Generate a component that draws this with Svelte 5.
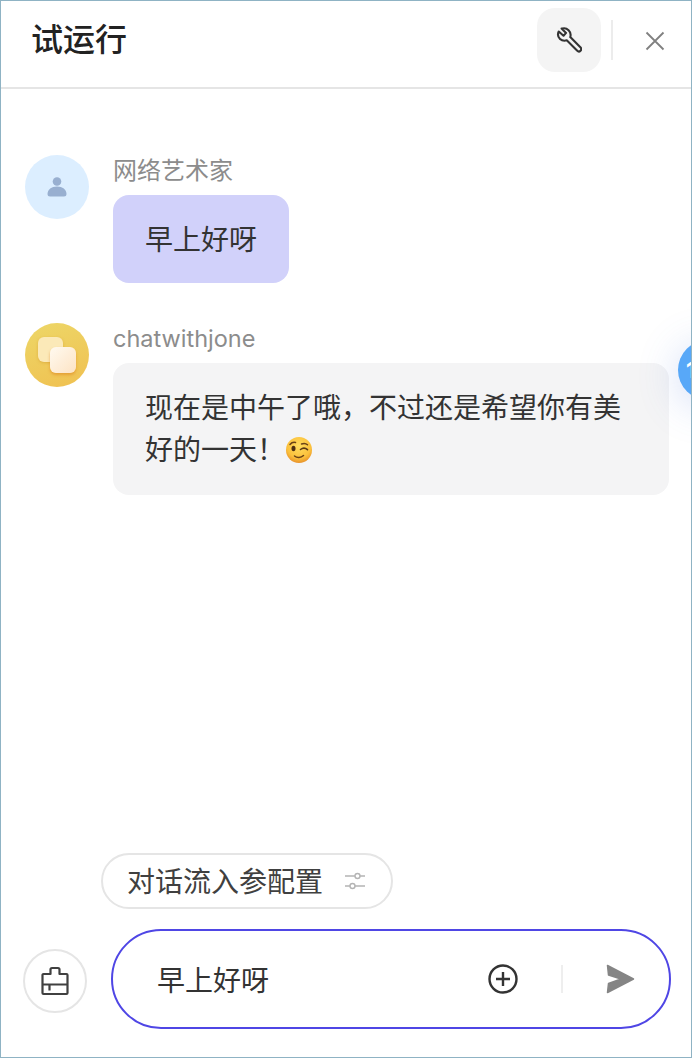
<script lang="ts">
  type Msg = { name: string; text: string; kind: 'user' | 'bot' };

  const messages: Msg[] = [
    { name: '网络艺术家', text: '早上好呀', kind: 'user' },
    { name: 'chatwithjone', text: '现在是中午了哦，不过还是希望你有美好的一天！', kind: 'bot' }
  ];
</script>

<div class="panel">
  <header class="head">
    <h1>试运行</h1>
    <button class="tool" aria-label="工具">
      <svg width="26" height="26" viewBox="4.500 2.500 18 18.500" fill="none" stroke="#333" stroke-width="1.500" stroke-linejoin="round">
        <path d="M8.200 3.600l3.200 3.100-1.800 2-3.400-3c-.9 2-.5 4 .9 5.300 1.400 1.300 3.100 1.500 4.800 1l7.300 7.300c.8.800 1.800.8 2.500.1.700-.7.700-1.700-.1-2.500l-7.200-7.200c.5-1.700.1-3.600-1.200-4.900-1.300-1.300-3-1.700-4.500-1.200z"/>
      </svg>
    </button>
    <span class="vline"></span>
    <button class="close" aria-label="关闭">
      <svg width="20" height="20" viewBox="0 0 20 20" stroke="#808080" stroke-width="1.800" fill="none">
        <path d="M1.500 1.500l17 17M18.500 1.500l-17 17"/>
      </svg>
    </button>
  </header>

  <main class="chat">
    {#each messages as m}
      <section class="msg">
        {#if m.kind === 'user'}
          <div class="avatar user">
            <svg width="20" height="24" viewBox="0 0 20 24" fill="#98afd0">
              <circle cx="10" cy="6.500" r="4.300"/>
              <path d="M.5 19c0-4.500 4-7.500 9.500-7.500s9.500 3 9.500 7.500c0 1.700-1 2.500-2.500 2.500H3C1.500 21.500.5 20.700.5 19z"/>
            </svg>
          </div>
        {:else}
          <div class="avatar bot">
            <span class="sq back"></span>
            <span class="sq front"></span>
          </div>
        {/if}
        <div class="body">
          <div class="name {m.kind}">{m.name}</div>
          <div class="bubble {m.kind}">
            {m.text}{#if m.kind === 'bot'}<svg class="emoji" width="28" height="28" viewBox="0 0 28 28">
                <defs>
                  <radialGradient id="face" cx="50%" cy="35%" r="65%">
                    <stop offset="0" stop-color="#ffdc5e"/>
                    <stop offset="0.7" stop-color="#fbc13c"/>
                    <stop offset="1" stop-color="#e8922a"/>
                  </radialGradient>
                </defs>
                <circle cx="14" cy="14" r="13" fill="url(#face)"/>
                <path d="M5 8.500c1.500-1.800 3.500-2.500 5.500-2M16.500 8c2-.8 4.500-.6 6 .8" stroke="#6b4216" stroke-width="1.500" fill="none" stroke-linecap="round"/>
                <ellipse cx="8.500" cy="12.500" rx="2" ry="2.800" fill="#4d2f12"/>
                <path d="M15.500 13.500c2-1.600 5-1.600 7 .2" stroke="#5a3814" stroke-width="1.600" fill="none" stroke-linecap="round"/>
                <path d="M9.500 20c2.500 2.200 6.500 2 9-.5" stroke="#6b4216" stroke-width="1.500" fill="none" stroke-linecap="round"/>
              </svg>{/if}
          </div>
        </div>
      </section>
    {/each}
  </main>

  <div class="config-row">
    <button class="config">
      <span>对话流入参配置</span>
      <svg width="22" height="20" viewBox="0 0 22 20" fill="none" stroke="#b4b4b4" stroke-width="1.400">
        <path d="M1 5h10M16 5h5M1 15h5M11 15h10"/>
        <circle cx="13.500" cy="5" r="2.500"/>
        <circle cx="8.500" cy="15" r="2.500"/>
      </svg>
    </button>
  </div>

  <footer class="composer">
    <button class="brush" aria-label="清空">
      <svg width="28" height="30" viewBox="0 0 28 30" fill="none" stroke="#404040" stroke-width="2.200" stroke-linejoin="round">
        <path d="M9.500 8V3.500A1.500 1.500 0 0 1 11 2h6a1.500 1.500 0 0 1 1.500 1.500V8h7a1 1 0 0 1 1 1v18a1 1 0 0 1-1 1h-23a1 1 0 0 1-1-1V9a1 1 0 0 1 1-1z"/>
        <path d="M1.500 18.500h25M8.500 18.500v6"/>
      </svg>
    </button>
    <div class="input">
      <span class="typed">早上好呀</span>
      <svg class="plus" width="30" height="30" viewBox="0 0 30 30" fill="none" stroke="#333" stroke-width="2.400">
        <circle cx="15" cy="15" r="13.500"/>
        <path d="M8 15h14M15 8v14"/>
      </svg>
      <span class="sep"></span>
      <svg class="send" width="30" height="30" viewBox="0 0 30 30" fill="#858585" stroke="#858585" stroke-width="1.500" stroke-linejoin="round">
        <path d="M2.500 1.500L28.500 15 2.500 28.500 3.500 19.500 16 15 3.500 11z"/>
      </svg>
    </div>
  </footer>

  <div class="float-btn"><span>1</span></div>
</div>

<style>
  :global(body) {
    margin: 0;
    background: #fff;
  }

  .panel {
    position: relative;
    width: 692px;
    height: 1058px;
    box-sizing: border-box;
    border: 1px solid #8fb3c4;
    overflow: hidden;
    display: flex;
    flex-direction: column;
    font-family: Inter, "Noto Sans CJK SC", sans-serif;
    color: #333;
    background: #fff;
  }

  button {
    border: 0;
    background: none;
    padding: 0;
    font: inherit;
    color: inherit;
  }

  .head {
    height: 88px;
    flex: none;
    box-sizing: border-box;
    border-bottom: 2px solid #e5e5e5;
    display: flex;
    align-items: center;
    padding: 0 26px 0 30px;
  }

  h1 {
    margin: 0 auto 0 0;
    font-size: 32px;
    line-height: 40px;
    font-weight: 500;
    color: #222;
    position: relative;
    top: -4px;
  }

  .tool {
    width: 64px;
    height: 64px;
    border-radius: 18px;
    background: #f4f4f4;
    display: flex;
    align-items: center;
    justify-content: center;
    position: relative;
    top: -4px;
  }

  .vline {
    width: 2px;
    height: 40px;
    background: #ececec;
    margin-left: 10px;
    position: relative;
    top: -4px;
  }

  .close {
    width: 20px;
    height: 20px;
    margin-left: 32px;
    position: relative;
    top: -3px;
  }

  .close svg {
    display: block;
  }

  .chat {
    flex: 1;
    display: flex;
    flex-direction: column;
    gap: 40px;
    padding: 66px 22px 0 24px;
  }

  .msg {
    display: flex;
    gap: 24px;
    align-items: flex-start;
  }

  .avatar {
    position: relative;
    width: 64px;
    height: 64px;
    border-radius: 50%;
    flex: none;
    display: flex;
    align-items: center;
    justify-content: center;
  }

  .avatar.user {
    background: #dceeff;
  }

  .avatar.bot {
    background: linear-gradient(160deg, #edd768, #f0c050);
  }

  .sq {
    position: absolute;
    border-radius: 6px;
  }

  .sq.back {
    left: 13px;
    top: 14px;
    width: 25px;
    height: 25px;
    background: #fbe9b8;
    box-shadow: 0 1px 3px rgba(200, 140, 30, 0.4);
  }

  .sq.front {
    left: 25px;
    top: 24px;
    width: 26px;
    height: 26px;
    background: linear-gradient(135deg, #fffaf0, #fde3c4);
    box-shadow: 0 2px 3px rgba(220, 130, 30, 0.55);
  }

  .body {
    min-width: 0;
    flex: 1;
  }

  .name {
    font-size: 24px;
    line-height: 32px;
    color: #8c8c8c;
  }

  .name.bot {
    font-size: 23.500px;
  }

  .bubble {
    margin-top: 8px;
    font-size: 28px;
    line-height: 42px;
    color: #333;
    padding: 24px 32px 0;
    border-radius: 16px;
    box-sizing: border-box;
  }

  .bubble.user {
    width: max-content;
    padding-bottom: 22px;
    background: #d1d1fa;
    height: 88px;
  }

  .bubble.bot {
    width: 556px;
    background: #f4f4f5;
    height: 132px;
  }

  .emoji {
    vertical-align: 2px;
    margin: -6px 0;
  }

  .config-row {
    flex: none;
    padding-left: 100px;
    height: 76px;
  }

  .config {
    width: 292px;
    height: 56px;
    box-sizing: border-box;
    border: 2px solid #e5e5e5;
    border-radius: 28px;
    display: flex;
    align-items: center;
    gap: 21px;
    padding-left: 24px;
    font-size: 28px;
    color: #404040;
    white-space: nowrap;
  }

  .config span {
    position: relative;
    top: -1px;
  }

  .config svg {
    flex: none;
  }

  .composer {
    flex: none;
    height: 128px;
    box-sizing: border-box;
    display: flex;
    align-items: flex-start;
    padding-left: 22px;
    gap: 24px;
  }

  .brush {
    width: 64px;
    height: 64px;
    margin-top: 20px;
    box-sizing: border-box;
    border: 2px solid #e5e5e5;
    border-radius: 50%;
    display: flex;
    align-items: center;
    justify-content: center;
    flex: none;
  }

  .input {
    width: 560px;
    height: 100px;
    box-sizing: border-box;
    border: 2px solid #4f46e5;
    border-radius: 50px;
    display: flex;
    align-items: center;
    padding-left: 44px;
  }

  .typed {
    font-size: 28px;
    color: #333;
    margin-right: auto;
  }

  .sep {
    width: 2px;
    height: 28px;
    background: #eee;
    margin: 0 42px 0 43px;
  }

  .send {
    margin-right: 34px;
  }

  .float-btn {
    position: absolute;
    left: 677px;
    top: 339px;
    width: 60px;
    height: 60px;
    border-radius: 50%;
    background: #58a8f8;
    box-shadow: 0 6px 40px rgba(80, 120, 220, 0.25);
    color: #fff;
    font-size: 22px;
    font-weight: 700;
    display: flex;
    align-items: center;
    padding-left: 8px;
    box-sizing: border-box;
  }
</style>
